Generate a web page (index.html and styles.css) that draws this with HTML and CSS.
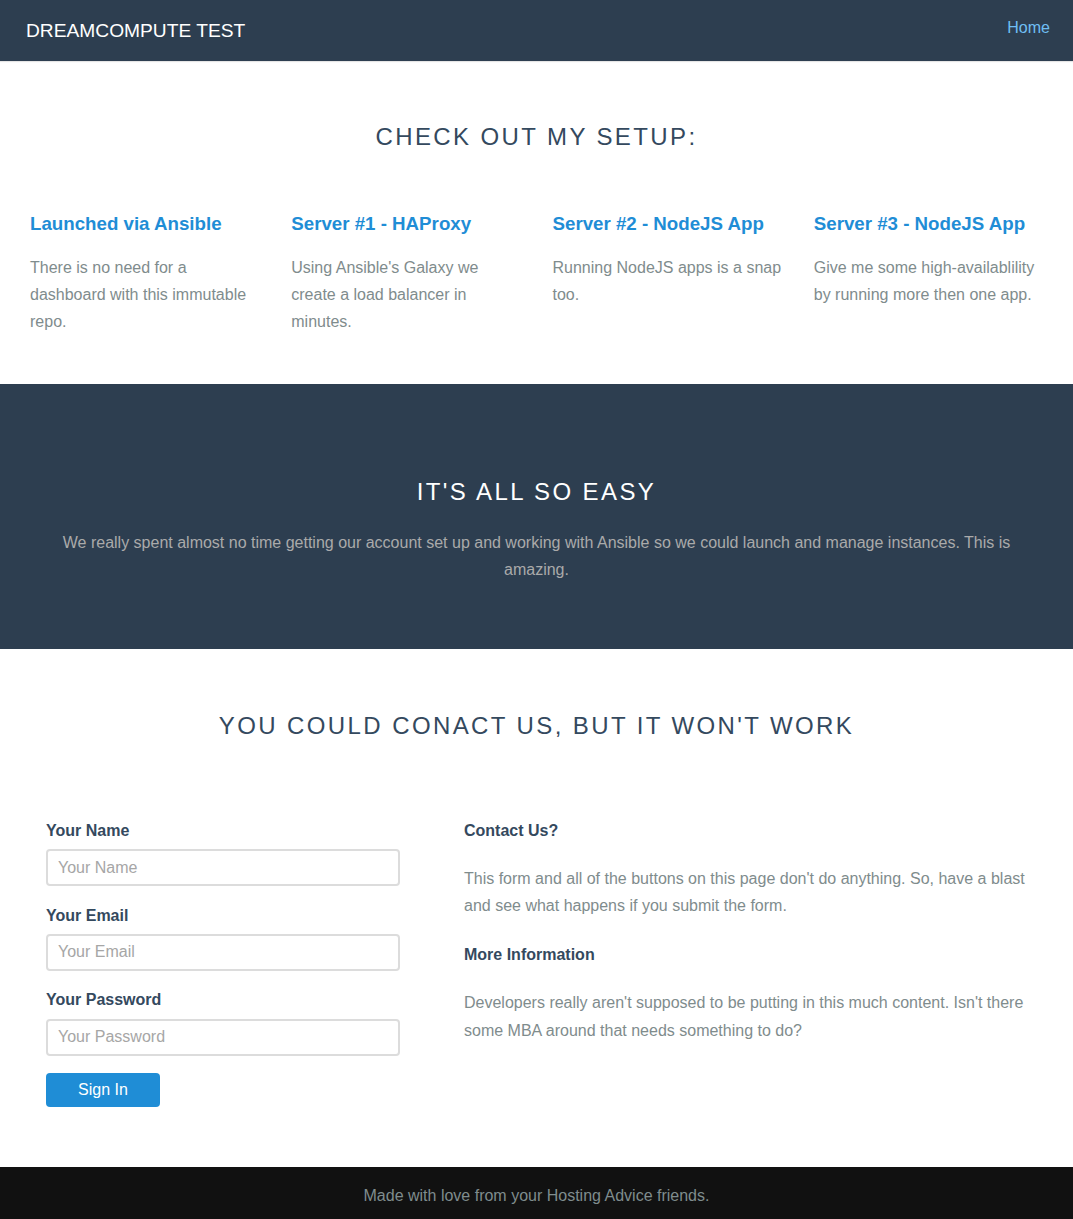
FILE: index.html
```html
<!DOCTYPE html>
<html lang="en">
<head>
<meta charset="utf-8">
<title>DreamCompute Test</title>
<link rel="stylesheet" href="styles.css">
</head>
<body>
<header class="navbar">
  <a class="brand" href="#">DREAMCOMPUTE TEST</a>
  <nav class="nav"><a class="nav-link" href="#">Home</a></nav>
</header>

<main>
  <section class="content setup">
    <h2 class="content-head">Check Out My Setup:</h2>
    <div class="features">
      <div class="feature">
        <h3 class="content-subhead">Launched via Ansible</h3>
        <p>There is no need for a dashboard with this immutable repo.</p>
      </div>
      <div class="feature">
        <h3 class="content-subhead">Server #1 - HAProxy</h3>
        <p>Using Ansible's Galaxy we create a load balancer in minutes.</p>
      </div>
      <div class="feature">
        <h3 class="content-subhead">Server #2 - NodeJS App</h3>
        <p>Running NodeJS apps is a snap too.</p>
      </div>
      <div class="feature">
        <h3 class="content-subhead">Server #3 - NodeJS App</h3>
        <p>Give me some high-availablility by running more then one app.</p>
      </div>
    </div>
  </section>

  <section class="ribbon">
    <div class="ribbon-inner">
      <h2 class="content-head content-head-ribbon">It's All So Easy</h2>
      <p>We really spent almost no time getting our account set up and working with Ansible so we could launch and manage instances. This is amazing.</p>
    </div>
  </section>

  <section class="content contact">
    <h2 class="content-head">You Could Conact Us, But It Won't Work</h2>
    <div class="contact-grid">
      <div class="form-col">
        <form class="form">
          <label for="name">Your Name</label>
          <input id="name" type="text" placeholder="Your Name">
          <label for="email">Your Email</label>
          <input id="email" type="email" placeholder="Your Email">
          <label for="password">Your Password</label>
          <input id="password" type="password" placeholder="Your Password">
          <button type="submit" class="button">Sign In</button>
        </form>
      </div>
      <div class="info-col">
        <h4>Contact Us?</h4>
        <p>This form and all of the buttons on this page don't do anything. So, have a blast and see what happens if you submit the form.</p>
        <h4>More Information</h4>
        <p>Developers really aren't supposed to be putting in this much content. Isn't there some MBA around that needs something to do?</p>
      </div>
    </div>
  </section>
</main>

<footer class="footer">Made with love from your Hosting Advice friends.</footer>
</body>
</html>
```

FILE: styles.css
```css
* { box-sizing: border-box; }

html, body {
  margin: 0;
  padding: 0;
}

body {
  font-family: "Liberation Sans", Arial, Helvetica, sans-serif;
  font-size: 16px;
  line-height: 27.2px;
  color: #7f8c8d;
  background: #fff;
}

h1, h2, h3, h4, h5, h6, label { color: #34495e; }

a { text-decoration: none; }

/* Navbar */
.navbar {
  height: 61px;
  background: #2d3e50;
  box-shadow: 0 1px 1px rgba(0, 0, 0, 0.1);
  display: flex;
  justify-content: space-between;
  align-items: flex-start;
  padding: 0 23px 0 26px;
  position: relative;
  z-index: 2;
}

.brand {
  color: #fff;
  font-size: 19.2px;
  line-height: 27.2px;
  margin-top: 17px;
  font-weight: 400;
}

.nav-link {
  display: block;
  color: #6fbef3;
  font-size: 16px;
  line-height: 27.2px;
  margin-top: 13.5px;
}

/* Content */
.content {
  padding: 14px 14px 14px;
}

.content-head {
  font-size: 24px;
  font-weight: 400;
  text-transform: uppercase;
  letter-spacing: 0.1em;
  text-align: center;
  margin: 48px 0 24px;
  line-height: 27.2px;
}

.content-head-ribbon { color: #fff; }

.features {
  display: grid;
  grid-template-columns: repeat(4, 1fr);
}

.feature {
  padding: 16px;
}

.content-subhead {
  color: #1f8dd6;
  font-size: 18.72px;
  font-weight: 700;
  margin: 19.5px 0 17px;
  line-height: 27.2px;
}

.feature p {
  margin: 16px 0 18px;
}

/* Ribbon */
.ribbon {
  background: #2d3e50;
  color: #aaa;
}

.ribbon-inner {
  padding: 46px 46px 50px;
  text-align: center;
  overflow: hidden;
}

.ribbon-inner .content-head { margin-top: 48px; }

.ribbon-inner p {
  margin: 24px 0 16px;
}

/* Contact */
.contact .content-head { margin-top: 49px; }

.contact-grid {
  display: grid;
  grid-template-columns: 2fr 3fr;
}

.form-col {
  padding: 32px 32px 14px 32px;
}

.info-col {
  padding: 32px 32px 32px 32px;
}

.form {
  display: flex;
  flex-direction: column;
  align-items: flex-start;
  margin-top: 21.3px;
  margin-bottom: 32px;
}

.form label {
  font-weight: 700;
  font-size: 16px;
  line-height: 27.2px;
  margin-bottom: 5.2px;
}

.form input {
  width: 100%;
  height: 37px;
  font-family: "Liberation Sans", Arial, Helvetica, sans-serif;
  font-size: 16px;
  color: #34495e;
  padding: 0 10px;
  border: 2px solid #dcdcdc;
  border-radius: 4px;
  margin: 0 0 15.5px;
  background: #fff;
  outline: none;
}

.form input::placeholder { color: #a6a6a6; }

.form input:last-of-type { margin-bottom: 17px; }

.button {
  width: 114px;
  height: 34px;
  background: #1f8dd6;
  color: #fff;
  border: none;
  border-radius: 4px;
  font-family: "Liberation Sans", Arial, Helvetica, sans-serif;
  font-size: 16px;
  padding: 0;
  cursor: pointer;
}

.info-col h4 {
  font-size: 16px;
  font-weight: 700;
  margin: 21.3px 0;
  line-height: 27.2px;
}

.info-col p {
  margin: 16px 0;
}

/* Footer */
.footer {
  background: #111;
  color: #7f8c8d;
  text-align: center;
  padding: 15px 0 10px;
}
```
